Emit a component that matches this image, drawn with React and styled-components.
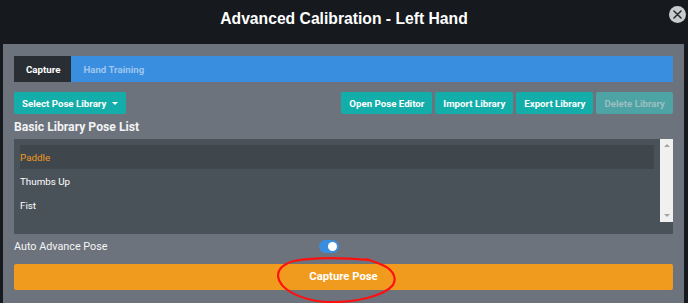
import React from "react";
import styled, { createGlobalStyle } from "styled-components";

const Global = createGlobalStyle`
  html, body { margin: 0; padding: 0; }
  body {
    background: #16191d;
    font-family: Roboto, "Liberation Sans", Arial, sans-serif;
    width: 688px;
    height: 303px;
    overflow: hidden;
  }
`;

const Page = styled.div`
  display: flex;
  flex-direction: column;
  height: 303px;
`;

const Header = styled.header`
  position: relative;
  height: 44px;
  display: flex;
  align-items: center;
  justify-content: center;
`;

const Title = styled.h1`
  margin: 0 0 7px;
  color: #ffffff;
  font-family: "Liberation Sans", Arial, sans-serif;
  font-size: 15.7px;
  font-weight: 700;
`;

const CloseButton = styled.button`
  position: absolute;
  right: 2px;
  top: 6px;
  width: 17px;
  height: 17px;
  border-radius: 50%;
  border: none;
  padding: 0;
  background: #c9cbcd;
  display: flex;
  align-items: center;
  justify-content: center;
`;

const Panel = styled.main`
  flex: 1;
  margin: 0 4px 0 3px;
  background: #6c737c;
  padding: 12px 11px 0 11px;
  display: flex;
  flex-direction: column;
`;

const TabBar = styled.nav`
  height: 26px;
  background: #3a8ee0;
  display: flex;
`;

const Tab = styled.div`
  padding: 0 11px 0 12px;
  display: flex;
  align-items: center;
  font-size: 9.7px;
  font-weight: 700;
  color: ${(p) => (p.$active ? "#ffffff" : "#9ec6ee")};
  background: ${(p) => (p.$active ? "#292e34" : "transparent")};
`;

const Toolbar = styled.div`
  margin-top: 10px;
  display: flex;
  justify-content: space-between;
`;

const ButtonGroup = styled.div`
  display: flex;
  gap: 3px;
`;

const Button = styled.button`
  height: 22px;
  border: none;
  border-radius: 2px;
  padding: 0 8px 0 8px;
  background: ${(p) => (p.$disabled ? "#4ea3a4" : "#13aeaa")};
  color: ${(p) => (p.$disabled ? "#9cbfc1" : "#ffffff")};
  font-family: Roboto, sans-serif;
  font-size: 9.7px;
  font-weight: 700;
  display: flex;
  align-items: center;
  gap: 6px;
`;

const Caret = styled.span`
  width: 0;
  height: 0;
  border-left: 3px solid transparent;
  border-right: 3px solid transparent;
  border-top: 3px solid #ffffff;
`;

const Heading = styled.h2`
  margin: 5px 0 4px;
  color: #f2f3f4;
  font-size: 12.2px;
  font-weight: 700;
  line-height: 16px;
`;

const ListBox = styled.div`
  height: 95px;
  background: #4a5259;
  display: flex;
  align-items: flex-start;
`;

const ListItems = styled.ul`
  flex: 1;
  list-style: none;
  margin: 0;
  padding: 6px 6px 0 6px;
`;

const ListItem = styled.li`
  height: 24px;
  display: flex;
  align-items: center;
  background: ${(p) => (p.$selected ? "#40474c" : "transparent")};
  color: ${(p) => (p.$selected ? "#f19a1f" : "#ffffff")};
  font-size: 9.8px;
`;

const Scrollbar = styled.div`
  width: 13px;
  height: 83px;
  background: #f0f0f0;
  display: flex;
  flex-direction: column;
  justify-content: space-between;
  align-items: center;
  padding: 5px 0;
  box-sizing: border-box;
`;

const Arrow = styled.span`
  width: 0;
  height: 0;
  border-left: 3px solid transparent;
  border-right: 3px solid transparent;
  ${(p) => (p.$up ? "border-bottom: 3px solid #a3a3a3;" : "border-top: 3px solid #a3a3a3;")}
`;

const OptionRow = styled.div`
  margin-top: 6px;
  height: 13px;
  display: flex;
  align-items: center;
`;

const OptionLabel = styled.span`
  width: 305px;
  color: #f4f5f6;
  font-size: 10.8px;
`;

const Toggle = styled.span`
  width: 20px;
  height: 13px;
  border-radius: 7px;
  background: #3a8ee0;
  display: flex;
  align-items: center;
  justify-content: flex-end;
  padding: 0 2px;
  box-sizing: border-box;
`;

const Knob = styled.span`
  width: 9px;
  height: 9px;
  border-radius: 50%;
  background: #ffffff;
`;

const CaptureWrap = styled.div`
  position: relative;
  margin-top: 11px;
`;

const CaptureButton = styled.button`
  width: 100%;
  height: 26px;
  border: none;
  border-radius: 2px;
  background: #f19b1e;
  color: #ffffff;
  font-family: Roboto, sans-serif;
  font-size: 11.3px;
  font-weight: 700;
  display: flex;
  align-items: center;
  justify-content: center;
  padding: 0 0 1px 0;
`;

const Annotation = styled.svg`
  position: absolute;
  left: 262px;
  top: -6px;
  overflow: visible;
  pointer-events: none;
`;

export default function App() {
  return (
    <>
      <Global />
      <Page>
        <Header>
          <Title>Advanced Calibration - Left Hand</Title>
          <CloseButton aria-label="close">
            <svg width="9" height="9" viewBox="0 0 9 9">
              <path d="M1 1 L8 8 M8 1 L1 8" stroke="#2b2f33" strokeWidth="1.6" strokeLinecap="round" />
            </svg>
          </CloseButton>
        </Header>
        <Panel>
          <TabBar>
            <Tab $active>Capture</Tab>
            <Tab>Hand Training</Tab>
          </TabBar>
          <Toolbar>
            <Button>
              Select Pose Library <Caret />
            </Button>
            <ButtonGroup>
              <Button>Open Pose Editor</Button>
              <Button>Import Library</Button>
              <Button>Export Library</Button>
              <Button $disabled>Delete Library</Button>
            </ButtonGroup>
          </Toolbar>
          <Heading>Basic Library Pose List</Heading>
          <ListBox>
            <ListItems>
              <ListItem $selected>Paddle</ListItem>
              <ListItem>Thumbs Up</ListItem>
              <ListItem>Fist</ListItem>
            </ListItems>
            <Scrollbar>
              <Arrow $up />
              <Arrow />
            </Scrollbar>
          </ListBox>
          <OptionRow>
            <OptionLabel>Auto Advance Pose</OptionLabel>
            <Toggle>
              <Knob />
            </Toggle>
          </OptionRow>
          <CaptureWrap>
            <CaptureButton>Capture Pose</CaptureButton>
            <Annotation width="124" height="46" viewBox="0 0 124 46">
              <path
                d="M92 2 C70 0 40 -1 18 3 C7 6 2 11 2 18 C3 31 24 42 50 44 C80 45 108 38 117 27 C122 18 115 10 104 6 C100 4 96 3 90 1"
                fill="none"
                stroke="#ff1010"
                strokeWidth="2.2"
                strokeLinecap="round"
              />
            </Annotation>
          </CaptureWrap>
        </Panel>
      </Page>
    </>
  );
}
